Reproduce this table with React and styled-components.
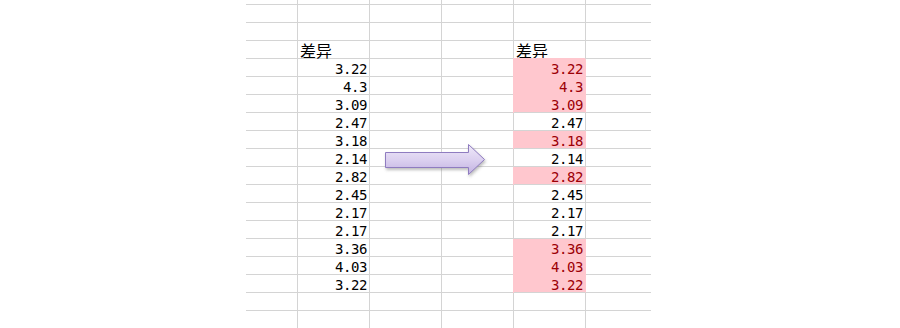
import React from "react";
import styled, { createGlobalStyle } from "styled-components";

const Global = createGlobalStyle`
  html, body { margin: 0; padding: 0; background: #ffffff; }
  body { width: 900px; height: 328px; overflow: hidden; }
`;

const GRID = "#d4d4d4";
const PINK = "#ffc7ce";
const RED = "#9c0006";

const Page = styled.div`
  width: 900px;
  height: 328px;
  overflow: hidden;
  padding-left: 246px;
  box-sizing: border-box;
`;

const Sheet = styled.div`
  position: relative;
  width: 405px;
  display: flex;
  flex-direction: column;
`;

const Row = styled.div`
  display: grid;
  grid-template-columns: 52px 72px 72px 72px 72px 65px;
  height: ${(p) => p.$h}px;
`;

const Cell = styled.div`
  box-sizing: border-box;
  display: flex;
  align-items: flex-end;
  justify-content: ${(p) => (p.$num ? "flex-end" : "flex-start")};
  padding: 0 ${(p) => (p.$num ? "2px" : "0")} 0 ${(p) => (p.$num ? "0" : "2px")};
  border-bottom: 1px solid ${(p) => (p.$pinkBottom ? PINK : GRID)};
  border-right: ${(p) => (p.$last ? "none" : `1px solid ${p.$pink ? PINK : GRID}`)};
  background: ${(p) => (p.$pink ? PINK : "transparent")};
  box-shadow: ${(p) =>
    p.$pink ? `-1px 0 0 ${PINK}${p.$coverTop ? `, -1px -1px 0 ${PINK}` : ""}` : "none"};
  color: ${(p) => (p.$pink ? RED : "#000")};
  overflow: visible;
  white-space: nowrap;
`;

const Num = styled.span`
  font-family: "DejaVu Sans Mono", "Liberation Mono", monospace;
  font-size: 14px;
  line-height: 14px;
  letter-spacing: -0.43px;
`;

const Head = styled.span`
  font-family: "Noto Sans CJK SC", "Noto Sans", sans-serif;
  font-size: 16px;
  line-height: 16px;
`;

const ArrowWrap = styled.svg`
  position: absolute;
  left: 137px;
  top: 141px;
  overflow: visible;
`;

const values = [
  "3.22", "4.3", "3.09", "2.47", "3.18", "2.14", "2.82",
  "2.45", "2.17", "2.17", "3.36", "4.03", "3.22",
];

const isPink = (v) => (v ? parseFloat(v) > 2.5 : false);

function Arrow() {
  return (
    <ArrowWrap width="104" height="40" viewBox="0 0 104 40">
      <defs>
        <linearGradient id="ag" x1="0" y1="0" x2="0" y2="1">
          <stop offset="0" stopColor="#efe9f9" />
          <stop offset="0.5" stopColor="#dcd1f0" />
          <stop offset="1" stopColor="#c2b2e1" />
        </linearGradient>
        <filter id="sh" x="-10%" y="-30%" width="130%" height="170%">
          <feDropShadow dx="1" dy="2" stdDeviation="1.4" floodColor="#6b6b6b" floodOpacity="0.45" />
        </filter>
      </defs>
      <path
        d="M2.5 11.5 H85.5 V3.5 L101.5 18.5 L85.5 33.5 V26.5 H2.5 Z"
        fill="url(#ag)"
        stroke="#8f7cc0"
        strokeWidth="1"
        strokeLinejoin="miter"
        filter="url(#sh)"
      />
    </ArrowWrap>
  );
}

export default function App() {
  const rows = [];
  rows.push({ h: 5 });
  rows.push({ h: 18 });
  rows.push({ h: 18 });
  rows.push({ h: 18, head: true });
  values.forEach((v, i) => rows.push({ h: 18, v, next: values[i + 1], first: i === 0 }));
  rows.push({ h: 18 });
  rows.push({ h: 18 });

  return (
    <Page>
      <Global />
      <Sheet>
        {rows.map((r, ri) => (
          <Row key={ri} $h={r.h}>
            {[0, 1, 2, 3, 4, 5].map((ci) => {
              const last = ci === 5;
              if (r.head && (ci === 1 || ci === 4)) {
                return (
                  <Cell key={ci} $last={last}>
                    <Head>差异</Head>
                  </Cell>
                );
              }
              if (r.v && ci === 1) {
                return (
                  <Cell key={ci} $num>
                    <Num>{r.v}</Num>
                  </Cell>
                );
              }
              if (r.v && ci === 4) {
                const pink = isPink(r.v);
                return (
                  <Cell
                    key={ci}
                    $num
                    $pink={pink}
                    $pinkBottom={pink && isPink(r.next)}
                    $coverTop={pink && r.first}
                  >
                    <Num>{r.v}</Num>
                  </Cell>
                );
              }
              return <Cell key={ci} $last={last} />;
            })}
          </Row>
        ))}
        <Arrow />
      </Sheet>
    </Page>
  );
}
